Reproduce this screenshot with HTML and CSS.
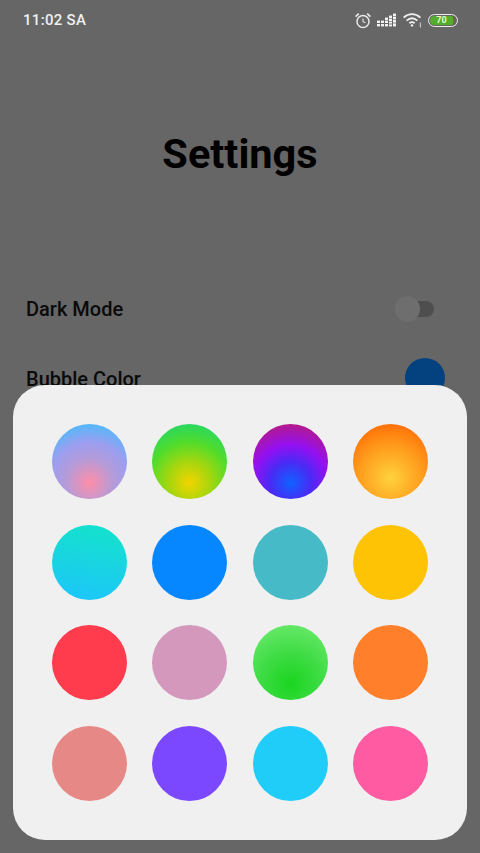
FILE: index.html
```html
<!DOCTYPE html>
<html lang="vi">
<head>
<meta charset="utf-8">
<title>Settings</title>
<link rel="stylesheet" href="styles.css">
</head>
<body>
<div class="screen">
  <header class="status">
    <span class="time">11:02 SA</span>
    <div class="status-icons">
      <svg class="ic-alarm" width="18" height="17" viewBox="0 0 18 17" fill="none" stroke="#e8e8e8">
        <circle cx="9" cy="9.5" r="6" stroke-width="1.5"/>
        <path d="M9 6.5v3.2l2.4 1" stroke-width="1.1"/>
        <path d="M1.6 4.6 4.8 1.6M16.4 4.6l-3.2-3" stroke-width="1.7"/>
      </svg>
      <svg class="ic-signal" width="19" height="14" viewBox="0 0 19 14" fill="#f2f2f2">
        <rect x="0" y="7.6" width="3" height="2.4"/><rect x="0" y="11" width="3" height="2.4"/>
        <rect x="4" y="7.6" width="3" height="2.4"/><rect x="4" y="11" width="3" height="2.4"/>
        <rect x="8" y="4.6" width="3" height="2.4"/><rect x="8" y="7.6" width="3" height="2.4"/><rect x="8" y="11" width="3" height="2.4"/>
        <rect x="12" y="2.6" width="3" height="2.4"/><rect x="12" y="5.6" width="3" height="2.4"/><rect x="12" y="8.6" width="3" height="2"/><rect x="12" y="11.4" width="3" height="2"/>
        <rect x="16" y="0.6" width="3" height="2.4"/><rect x="16" y="3.6" width="3" height="2.4"/><rect x="16" y="6.6" width="3" height="3"/><rect x="16" y="10.4" width="3" height="3"/>
      </svg>
      <svg class="ic-wifi" width="20" height="16" viewBox="0 0 20 16" fill="none" stroke="#f0f0f0" stroke-width="1.8">
        <path d="M0.6 5.6C5.6 1 12.4 1 17.4 5.6"/>
        <path d="M3.6 8.6c3.4-2.9 7.4-2.9 10.8 0"/>
        <path d="M6.4 11.2c1.6-1.3 3.6-1.3 5.2 0"/>
        <circle cx="9" cy="13.4" r="1.2" fill="#f0f0f0" stroke="none"/>
        <path d="M17.4 10.5v5" stroke-width="1.2" stroke="#c4c4c4"/>
      </svg>
      <div class="battery"><span class="battery-fill">70</span></div>
    </div>
  </header>

  <h1 class="title">Settings</h1>

  <div class="rows">
    <div class="row">
      <span class="label">Dark Mode</span>
      <div class="switch"><span class="track"></span><span class="thumb"></span></div>
    </div>
    <div class="row row-bubble">
      <span class="label">Bubble Color</span>
      <span class="bubble"></span>
    </div>
  </div>

  <div class="sheet">
    <span class="dot d1"></span><span class="dot d2"></span><span class="dot d3"></span><span class="dot d4"></span>
    <span class="dot d5"></span><span class="dot d6"></span><span class="dot d7"></span><span class="dot d8"></span>
    <span class="dot d9"></span><span class="dot d10"></span><span class="dot d11"></span><span class="dot d12"></span>
    <span class="dot d13"></span><span class="dot d14"></span><span class="dot d15"></span><span class="dot d16"></span>
  </div>
</div>
</body>
</html>
```
FILE: styles.css
```css
* { box-sizing: border-box; }
html, body { margin: 0; padding: 0; }
body { font-family: Roboto, "Liberation Sans", sans-serif; background: #666; }

.screen {
  position: relative;
  width: 480px;
  height: 853px;
  overflow: hidden;
  background: #666;
}

.status {
  display: flex;
  justify-content: space-between;
  align-items: center;
  height: 40px;
  padding: 0 22px 0 23px;
}
.time {
  color: #f0f0f0;
  font-size: 15px;
  font-weight: 500;
  letter-spacing: 0.3px;
}
.status-icons { display: flex; align-items: center; }
.ic-alarm { margin-right: 5px; }
.ic-signal { margin-right: 7px; }
.ic-wifi { margin-right: 5px; }
.battery {
  width: 30px;
  height: 13px;
  border: 1.3px solid #ececec;
  border-radius: 7px;
  padding: 1px;
  display: flex;
}
.battery-fill {
  width: 23px;
  background: #55ad2c;
  border-radius: 5px 2px 2px 5px;
  color: #eef7c8;
  font-size: 9px;
  line-height: 8px;
  font-weight: 700;
  text-align: center;
}

.title {
  margin: 90px 0 0;
  text-align: center;
  font-size: 41.5px;
  line-height: 47px;
  font-weight: 700;
  color: #000;
}

.rows { margin-top: 112px; padding: 0 35px 0 26px; }
.row {
  display: flex;
  justify-content: space-between;
  align-items: center;
  height: 40px;
}
.row-bubble { margin-top: 30px; }
.label { font-size: 20px; font-weight: 500; color: #0a0a0a; }

.switch { position: relative; width: 39px; height: 26px; margin-right: 11px; }
.track {
  position: absolute;
  left: 11px; top: 5px;
  width: 28px; height: 16px;
  border-radius: 8px;
  background: #4e4e4e;
}
.thumb {
  position: absolute;
  left: 0; top: 0;
  width: 25px; height: 26px;
  border-radius: 50%;
  background: #6e6e6e;
}
.bubble {
  width: 40px; height: 40px;
  border-radius: 50%;
  background: #03417f;
  margin-bottom: 2px;
}

.sheet {
  position: absolute;
  left: 13px; top: 385px;
  width: 454px; height: 455px;
  padding: 39px;
  border-radius: 32px;
  background: #f0f0f1;
  display: grid;
  grid-template-columns: repeat(4, 75px);
  justify-content: space-between;
  align-content: space-between;
}
.dot { width: 75px; height: 75px; border-radius: 50%; }

.d1 { background: radial-gradient(circle at 50% 78%, #ff8ea8 0%, #b59bd8 34%, #9c9ef0 58%, #55b8fa 84%); }
.d2 { background: radial-gradient(circle at 50% 78%, #f4d400 0%, #a6d60e 30%, #52dc2a 58%, #2ad860 84%); }
.d3 { background: radial-gradient(circle at 50% 78%, #0f62ff 0%, #4a2af5 30%, #9410f2 54%, #b51a85 86%); }
.d4 { background: radial-gradient(circle at 50% 72%, #ffd23c 0%, #ff9d1c 48%, #ff6f08 84%); }
.d5 { background: linear-gradient(10deg, #1cc8f6 10%, #15dfd0 85%); }
.d6 { background: #0686ff; }
.d7 { background: #46bac6; }
.d8 { background: #ffc306; }
.d9 { background: #ff3b4e; }
.d10 { background: #d398bb; }
.d11 { background: radial-gradient(circle at 50% 78%, #1ad520 0%, #3fdc45 45%, #64e866 84%); }
.d12 { background: #ff7f2a; }
.d13 { background: #e58886; }
.d14 { background: #7c48ff; }
.d15 { background: #20cdf9; }
.d16 { background: #ff5ba2; }
```
